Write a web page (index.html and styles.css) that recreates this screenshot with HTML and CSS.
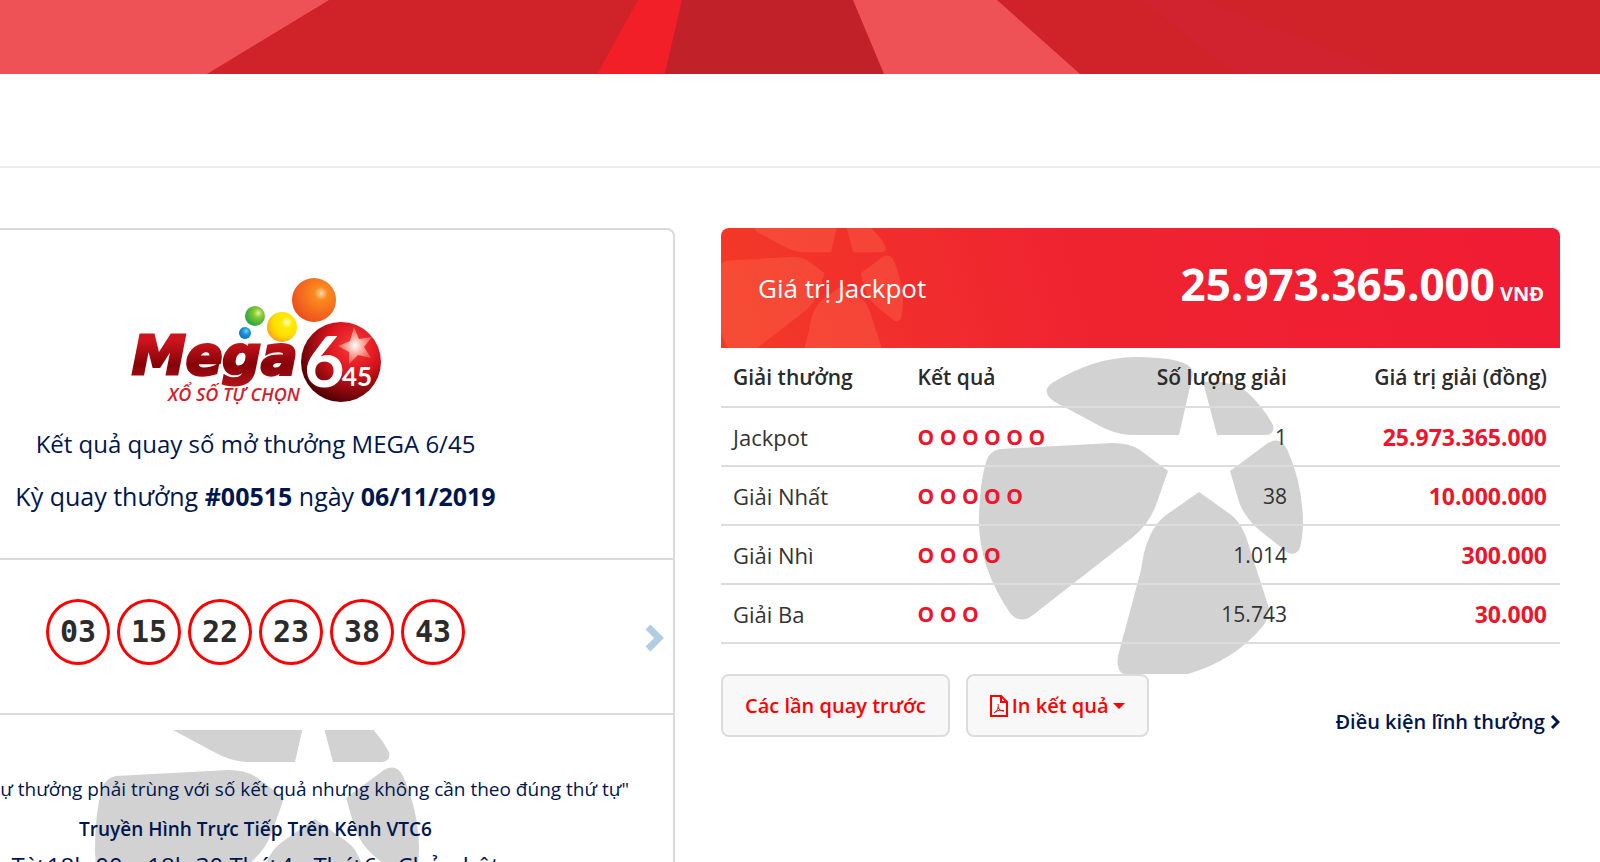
FILE: index.html
```
<!DOCTYPE html>
<html lang="vi">
<head>
    <meta charset="UTF-8">
    <meta name="viewport" content="width=device-width, initial-scale=1.0">
    <title>Mega 6/45</title>
    <link rel="stylesheet" href="styles.css">
</head>
<body>
    <svg class="defs" aria-hidden="true">
        <symbol id="petals" viewBox="979 357 324 317">
            <path d="M1055 402 Q1040 392 1052 383 Q1095 357 1135 357 Q1180 357 1190 367 Q1194 371 1192 378 L1179 435 H1130 Q1114 434 1098 425 Z"/>
            <path d="M1203 382 Q1230 379 1247 392 Q1264 408 1273 425 Q1275 435 1265 435 H1217 Z"/>
            <path d="M1000 449 L1112 443 Q1130 443 1140 450 L1168 471 L1156 505 Q1149 524 1133 537 L1033 615 Q1020 625 1010 613 Q979 567 979 522 Q979 486 986 462 Q989 451 1000 449 Z"/>
            <path d="M1230 471 L1268 443 Q1280 436 1287 449 Q1302 482 1303 520 Q1303 536 1300 548 Q1296 556 1288 553 L1258 529 Q1244 516 1239 502 Z"/>
            <path d="M1199 492 L1230 514 Q1240 521 1246 537 L1268 605 Q1271 615 1263 626 Q1235 660 1188 674 H1124 Q1116 672 1118 656 L1141 570 Q1146 530 1166 515 Z"/>
        </symbol>
    </svg>

    <div class="banner">
        <svg viewBox="0 0 1600 74" preserveAspectRatio="none" aria-hidden="true">
            <rect width="1600" height="74" fill="#cf2229"/>
            <path d="M0 0H329L207 74H0z" fill="#ef5256"/>
            <path d="M638 0H682L665 74H597z" fill="#f21f28"/>
            <path d="M682 0H853L884 74H665z" fill="#c1222a"/>
            <path d="M853 0H997L1080 74H884z" fill="#ef5256"/>
            <path d="M1140 0H1205L1395 74H1235z" fill="#d0222f"/>
        </svg>
    </div>
    <div class="topbar"></div>

    <div class="container">
        <div class="result-card">
            <div class="result-head">
                <svg class="logo" viewBox="128 274 256 130" role="img" aria-label="Mega 6/45">
                    <defs>
                        <linearGradient id="mega" x1="0" y1="0" x2="0" y2="1">
                            <stop offset="0.25" stop-color="#d0141e"/>
                            <stop offset="0.65" stop-color="#850307"/>
                            <stop offset="1" stop-color="#b3131b"/>
                        </linearGradient>
                        <radialGradient id="red" cx="0.66" cy="0.3" r="0.75">
                            <stop offset="0" stop-color="#ff3b3b"/>
                            <stop offset="0.45" stop-color="#d9141d"/>
                            <stop offset="1" stop-color="#4d0003"/>
                        </radialGradient>
                        <radialGradient id="orange" cx="0.66" cy="0.35" r="0.75">
                            <stop offset="0" stop-color="#ffd9b0"/>
                            <stop offset="0.2" stop-color="#fb8a1e"/>
                            <stop offset="1" stop-color="#ec4a1b"/>
                        </radialGradient>
                        <radialGradient id="yellow" cx="0.66" cy="0.35" r="0.75">
                            <stop offset="0" stop-color="#fffbd0"/>
                            <stop offset="0.25" stop-color="#ffea00"/>
                            <stop offset="0.6" stop-color="#ffe000"/>
                            <stop offset="1" stop-color="#f79a1c"/>
                        </radialGradient>
                        <radialGradient id="green" cx="0.66" cy="0.35" r="0.75">
                            <stop offset="0" stop-color="#e0f5b0"/>
                            <stop offset="0.3" stop-color="#8cc92f"/>
                            <stop offset="1" stop-color="#12a04c"/>
                        </radialGradient>
                        <radialGradient id="blue" cx="0.6" cy="0.35" r="0.75">
                            <stop offset="0" stop-color="#7fd0f5"/>
                            <stop offset="0.4" stop-color="#1893dd"/>
                            <stop offset="1" stop-color="#1566b5"/>
                        </radialGradient>
                        <radialGradient id="star" cx="0.5" cy="0.5" r="0.5">
                            <stop offset="0" stop-color="#fff"/>
                            <stop offset="0.35" stop-color="#ffc0b5"/>
                            <stop offset="1" stop-color="#f0564e"/>
                        </radialGradient>
                    </defs>
                    <circle cx="314" cy="299" r="22" fill="url(#orange)"/>
                    <circle cx="282" cy="326" r="15" fill="url(#yellow)"/>
                    <circle cx="255" cy="315" r="10" fill="url(#green)"/>
                    <circle cx="245" cy="332" r="6" fill="url(#blue)"/>
                    <text class="logo-name" x="132" y="373" fill="url(#mega)" stroke="url(#mega)">Mega</text>
                    <circle cx="341" cy="361" r="40" fill="url(#red)"/>
                    <path d="M354 326l5 12 13-2-8 10 7 11-13-3-9 9 0-12-11-6 12-5z" fill="url(#star)"/>
                    <text class="logo-six" x="304" y="386">6</text>
                    <text class="logo-45" x="342" y="385">45</text>
                    <text class="logo-sub" x="168" y="400">XỔ SỐ TỰ CHỌN</text>
                </svg>
                <p>Kết quả quay số mở thưởng MEGA 6/45</p>
                <p class="draw">Kỳ quay thưởng <b>#00515</b> ngày <b>06/11/2019</b></p>
            </div>
            <div class="result-numbers">
                <span class="ball">03</span>
                <span class="ball">15</span>
                <span class="ball">22</span>
                <span class="ball">23</span>
                <span class="ball">38</span>
                <span class="ball">43</span>
                <button class="next-btn" type="button" aria-label="Kỳ sau">
                    <svg viewBox="0 0 20 28"><path d="M4 3L15 14L4 25" fill="none" stroke="#b1cde4" stroke-width="7"/></svg>
                </button>
            </div>
            <div class="result-note">
                <svg class="petals"><use href="#petals"/></svg>
                <p>"Các con số dự thưởng phải trùng với số kết quả nhưng không cần theo đúng thứ tự"</p>
                <p class="channel">Truyền Hình Trực Tiếp Trên Kênh VTC6</p>
                <p class="schedule">Từ 18h:00 – 18h:30 Thứ 4 - Thứ 6 - Chủ nhật</p>
            </div>
        </div>

        <div class="prize">
            <svg class="petals"><use href="#petals"/></svg>
            <div class="jackpot">
                <svg class="jackpot-petals"><use href="#petals"/></svg>
                <span class="jackpot-label">Giá trị Jackpot</span>
                <span class="jackpot-value">25.973.365.000<small>VNĐ</small></span>
            </div>
            <table class="prize-table">
                <thead>
                    <tr>
                        <th>Giải thưởng</th>
                        <th>Kết quả</th>
                        <th class="num">Số lượng giải</th>
                        <th class="num">Giá trị giải (đồng)</th>
                    </tr>
                </thead>
                <tbody>
                    <tr>
                        <td class="name">Jackpot</td>
                        <td class="match">O O O O O O</td>
                        <td class="num">1</td>
                        <td class="num amount">25.973.365.000</td>
                    </tr>
                    <tr>
                        <td class="name">Giải Nhất</td>
                        <td class="match">O O O O O</td>
                        <td class="num">38</td>
                        <td class="num amount">10.000.000</td>
                    </tr>
                    <tr>
                        <td class="name">Giải Nhì</td>
                        <td class="match">O O O O</td>
                        <td class="num">1.014</td>
                        <td class="num amount">300.000</td>
                    </tr>
                    <tr>
                        <td class="name">Giải Ba</td>
                        <td class="match">O O O</td>
                        <td class="num">15.743</td>
                        <td class="num amount">30.000</td>
                    </tr>
                </tbody>
            </table>
            <div class="actions">
                <button class="btn" type="button">Các lần quay trước</button>
                <button class="btn" type="button">
                    <svg class="pdf-icon" viewBox="0 0 18 24" fill="none" stroke="#f00" stroke-width="2">
                        <path d="M1 2H11L17 8V22H1zM11 2V8H17"/>
                        <path d="M4 19C7 17 9 14 8 10M8 13C9 16 11 17 14 17M5 18C8 16 11 16 14 17" stroke-width="1"/>
                    </svg>
                    In kết quả
                    <span class="caret"></span>
                </button>
                <a class="terms" href="#">Điều kiện lĩnh thưởng
                    <svg viewBox="0 0 10 14"><path d="M2 1L8 7L2 13" fill="none" stroke="#00164f" stroke-width="3"/></svg>
                </a>
            </div>
        </div>
    </div>
</body>
</html>
```
FILE: styles.css
```
* {
    margin: 0;
    padding: 0;
    box-sizing: border-box;
    font-family: "Open Sans", "Noto Sans", sans-serif;
}
body {
    height: 100vh;
    overflow: hidden;
    background: #fff;
    color: #333;
}
.defs {
    display: none;
}
.banner {
    height: 74px;
}
.banner svg {
    display: block;
    width: 100%;
    height: 100%;
}
.topbar {
    height: 94px;
    border-bottom: 2px solid #ececec;
}
/* the left column runs past the edge of the window */
.container {
    display: grid;
    grid-template-columns: 1fr 1fr;
    gap: 46px;
    align-items: start;
    margin: 60px 40px 0 -164px;
}
.petals {
    position: absolute;
    z-index: -1;
    left: 258px;
    width: 324px;
    height: 317px;
    fill: #d2d2d2;
}

/* result card */
.result-card {
    border: 2px solid #dadada;
    border-radius: 8px;
    color: #00164f;
    text-align: center;
}
.result-head {
    padding: 45px 0 35px;
}
.logo {
    display: block;
    width: 256px;
    height: 130px;
    margin: 0 auto 12px;
}
.logo-name {
    font: italic bold 54px "DejaVu Sans", sans-serif;
    stroke-width: 3px;
}
.logo-six {
    font: bold 70px Lato, sans-serif;
    fill: #fff;
}
.logo-45 {
    font: bold 26px Lato, sans-serif;
    fill: #fff;
}
.logo-sub {
    font: italic 600 18px "Open Sans", sans-serif;
    fill: #d5202c;
}
.result-head p {
    font-size: 24px;
    line-height: 53px;
}
.result-head .draw {
    font-size: 25px;
}
.result-numbers {
    position: relative;
    display: flex;
    justify-content: center;
    gap: 7px;
    padding: 39px 0 48px;
    border-top: 2px solid #dadada;
    border-bottom: 2px solid #dadada;
}
.ball {
    width: 64px;
    height: 66px;
    border: 3px solid #f00;
    border-radius: 50%;
    color: #2b2b2b;
    font: bold 30px/60px "DejaVu Sans Mono", monospace;
}
.next-btn {
    position: absolute;
    right: 9px;
    top: 64px;
    width: 20px;
    height: 28px;
    border: none;
    background: none;
    cursor: pointer;
}
.next-btn svg {
    display: block;
}
.result-note {
    position: relative;
    z-index: 0;
    overflow: hidden;
    margin-top: 15px;
    padding: 39px 0;
    font-size: 19px;
    line-height: 40px;
}
.result-note .petals {
    top: -46px;
    left: 257px;
}
.channel {
    font-weight: 600;
}
.schedule {
    font-size: 24px;
    line-height: 34px;
}

/* prizes */
.prize {
    position: relative;
    z-index: 0;
}
.prize > .petals {
    top: 129px;
}
.jackpot {
    position: relative;
    display: flex;
    justify-content: space-between;
    align-items: center;
    height: 120px;
    padding: 0 16px 0 37px;
    overflow: hidden;
    border-radius: 8px 8px 0 0;
    background: linear-gradient(75deg, #f33a27, #ef2430 40%, #f01b34);
    color: #fff;
}
.jackpot-petals {
    position: absolute;
    left: -6px;
    top: -21px;
    width: 188px;
    height: 184px;
    fill: rgba(255, 120, 85, 0.3);
}
.jackpot-label {
    position: relative;
    font-size: 26px;
    font-weight: 500;
}
.jackpot-value {
    display: flex;
    align-items: baseline;
    gap: 5px;
    padding-bottom: 8px;
    font-size: 44px;
    font-weight: bold;
}
.jackpot-value small {
    font-size: 20px;
}
.prize-table {
    width: 100%;
    table-layout: fixed;
    border-collapse: collapse;
    font-size: 21px;
}
.prize-table th,
.prize-table td {
    height: 59px;
    padding: 0 13px 0 12px;
    border-bottom: 2px solid #dcdcdc;
    text-align: left;
}
.prize-table th {
    color: #2b2b2b;
    font-weight: 600;
}
.prize-table th:first-child {
    width: 22%;
}
.prize-table th:nth-child(2) {
    width: 25%;
}
.prize-table th:nth-child(3) {
    width: 22%;
}
.prize-table .name {
    font-size: 22px;
}
.prize-table .num {
    text-align: right;
}
.prize-table .match {
    color: #f0142a;
    font-weight: bold;
}
.prize-table .amount {
    color: #f0142a;
    font-size: 23px;
    font-weight: bold;
}
.actions {
    display: flex;
    gap: 16px;
    margin-top: 30px;
}
.btn {
    display: flex;
    align-items: center;
    gap: 4px;
    height: 63px;
    padding: 0 22px;
    border: 2px solid #dcdcdc;
    border-radius: 8px;
    background: #f8f8f8;
    color: #f00;
    font-size: 20px;
    font-weight: 600;
    cursor: pointer;
}
.pdf-icon {
    width: 18px;
    height: 24px;
}
.caret {
    border: 6px solid transparent;
    border-top-color: #f00;
    border-bottom: none;
}
.terms {
    margin: 34px 0 0 auto;
    color: #00164f;
    font-size: 20px;
    font-weight: 600;
    text-decoration: none;
}
.terms svg {
    width: 10px;
    height: 14px;
}
```
